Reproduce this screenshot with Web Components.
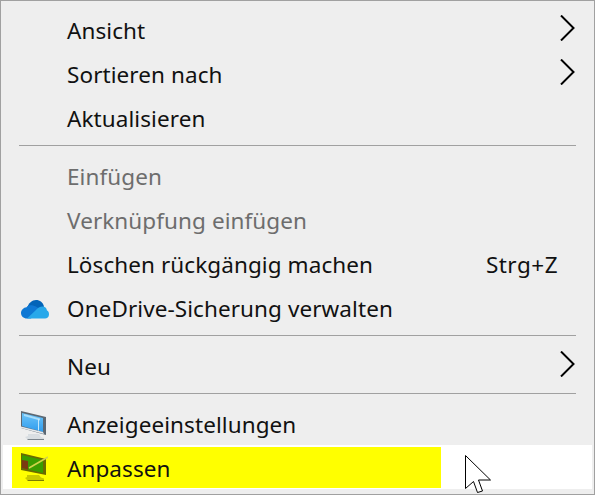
<!DOCTYPE html>
<html lang="de">
<head>
<meta charset="utf-8">
<title>Kontextmenü</title>
<style>
    html, body { margin: 0; padding: 0; background: #fff; }
    body { font-family: "Noto Sans", "Open Sans", sans-serif; }
</style>
</head>
<body>
<ctx-menu>
    <ctx-item submenu>Ansicht</ctx-item>
    <ctx-item submenu>Sortieren nach</ctx-item>
    <ctx-item>Aktualisieren</ctx-item>
    <ctx-sep></ctx-sep>
    <ctx-item disabled>Einfügen</ctx-item>
    <ctx-item disabled>Verknüpfung einfügen</ctx-item>
    <ctx-item shortcut="Strg+Z">Löschen rückgängig machen</ctx-item>
    <ctx-item>
        <svg slot="icon" width="28" height="19" viewBox="0 0 28 19">
            <path fill="#0364b8" d="M6 8C7.5 3 11 0 15 0c4 0 7 2.500 8 6.500L17 12z"/>
            <path fill="#0f78d4" d="M6 18.500C2.500 18.500 0 16 0 13c0-3 2.500-5.500 5.500-5.800C7 5.500 9.500 5 12 5.500c2 .5 4 1.500 5 2.500l-7 10.500z"/>
            <path fill="#28a8ea" d="M6 18.500l9-8.500c1.500-2 4-3.500 6.500-3.500 2.500 0 4 1.500 4.500 4 1.500.5 2 2 2 4 0 2.500-2 4-4 4z"/>
        </svg>
        OneDrive-Sicherung verwalten
    </ctx-item>
    <ctx-sep></ctx-sep>
    <ctx-item submenu>Neu</ctx-item>
    <ctx-sep></ctx-sep>
    <ctx-item>
        <svg slot="icon" width="26" height="29" viewBox="0 0 26 29">
            <defs>
                <linearGradient id="scr" x1="0" y1="0" x2="0" y2="1">
                    <stop offset="0" stop-color="#6cc4f8"/>
                    <stop offset="1" stop-color="#2f9cee"/>
                </linearGradient>
            </defs>
            <path fill="#d9dee2" d="M7 23h11l2 3 3 1v1H6l-2-2 3-1z"/>
            <path fill="#7b848c" d="M6 28h17v1H7z"/>
            <path fill="#5c6873" d="M0 0l25 6v18L0 17z"/>
            <path fill="url(#scr)" d="M1 2l21 5v14L1 15z"/>
            <path fill="#a9defb" d="M3 3l16 4.500v2L3 5z"/>
            <path fill="#c3e8fc" d="M17 8h1v11.500h-1z"/>
            <path fill="#e6eaed" d="M0 15.500l22 5.500 1 2-23-6z"/>
        </svg>
        Anzeigeeinstellungen
    </ctx-item>
    <ctx-band>
        <ctx-item style="--row-height:41px;--row-top:3px;--row-pad:9px">
            <svg slot="icon" width="27" height="28" viewBox="0 0 27 28" style="margin-top:-5px">
                <path fill="#c9c900" d="M6 22h12l2 2.500 3 1v1.500H6l-2-2 2-1z"/>
                <path fill="#7d7d00" d="M6 27h17v1H7z"/>
                <path fill="#6a6a00" d="M0 0l25 6v16L0 17z"/>
                <path fill="#3a9c00" d="M1 2l21 5v13L1 15z"/>
                <path fill="#7a3a10" d="M1 7l6 1v8.500l-6-1.500z"/>
                <path fill="none" stroke="#d2d24a" stroke-width="1.600" d="M27 4L8 15"/>
            </svg>
            Anpassen
        </ctx-item>
    </ctx-band>
    <mouse-cursor></mouse-cursor>
</ctx-menu>

<script>
// kontextmenue, alles in shadow roots
class CtxMenu extends HTMLElement {
    constructor() {
        super();
        this.attachShadow({ mode: 'open' }).innerHTML = /*html*/`
            <style>
                :host {
                    display: block;
                    position: relative;
                    box-sizing: border-box;
                    width: 595px;
                    height: 495px;
                    padding: 8px 0 0;
                    background: #eeeeee;
                    border: 1px solid #a0a0a0;
                    color: #111;
                    font-family: "Noto Sans", "Open Sans", sans-serif;
                    font-size: 22.5px;
                    letter-spacing: 0.08px;
                }
            </style>
            <slot></slot>
        `;
    }
}

class CtxItem extends HTMLElement {
    constructor() {
        super();
        this.attachShadow({ mode: 'open' }).innerHTML = /*html*/`
            <style>
                :host {
                    display: flex;
                    align-items: center;
                    box-sizing: border-box;
                    height: var(--row-height, 44px);
                    padding: var(--row-top, 0px) 17px 0 var(--row-pad, 20px);
                    white-space: nowrap;
                }
                :host([disabled]) { color: #6d6d6d; }
                .icon { display: flex; align-items: center; flex: none; width: 46px; }
                .label { flex: 1; margin-top: -2px; }
                .key { flex: none; margin-top: -2px; letter-spacing: 0.5px; }
                .arrow { flex: none; width: 19px; height: 26px; display: block; margin-top: -6px; }
            </style>
            <span class="icon"><slot name="icon"></slot></span>
            <span class="label"><slot></slot></span>
            <span class="key"></span>
            <svg class="arrow" viewBox="0 0 19 26"></svg>
        `;
    }

    connectedCallback() {
        this.shadowRoot.querySelector('.key').textContent = this.getAttribute('shortcut') || '';
        if (this.hasAttribute('submenu')) {
            this.shadowRoot.querySelector('.arrow').innerHTML =
                '<path d="M3 0.500L15.500 13 3 25.500" fill="none" stroke="#000" stroke-width="2"/>';
        }
    }
}

class CtxSep extends HTMLElement {
    constructor() {
        super();
        this.attachShadow({ mode: 'open' }).innerHTML = /*html*/`
            <style>
                :host {
                    display: block;
                    height: 1px;
                    margin: 4px 18px 9px;
                    background: #a0a0a0;
                }
            </style>
        `;
    }
}

// weisser streifen mit gelber markierung
class CtxBand extends HTMLElement {
    constructor() {
        super();
        this.attachShadow({ mode: 'open' }).innerHTML = /*html*/`
            <style>
                :host {
                    display: block;
                    box-sizing: border-box;
                    height: 44px;
                    margin: -2px 2px 0;
                    padding: 2px 0 1px 9px;
                    background: #fff;
                }
                .mark { width: 429px; background: #ffff00; }
            </style>
            <div class="mark"><slot></slot></div>
        `;
    }
}

class MouseCursor extends HTMLElement {
    constructor() {
        super();
        this.attachShadow({ mode: 'open' }).innerHTML = /*html*/`
            <style>
                :host {
                    display: block;
                    position: absolute;
                    left: 464px;
                    top: 454px;
                    width: 27px;
                    height: 40px;
                }
                svg { display: block; }
            </style>
            <svg width="27" height="40" viewBox="0 0 27 40">
                <path fill="#fff" stroke="#000" stroke-width="1" d="M0.500 0.500V33.500L8.500 26.500 12.500 37.500 17.500 36 13.500 25H25.500z"/>
            </svg>
        `;
    }
}

customElements.define('ctx-menu', CtxMenu);
customElements.define('ctx-item', CtxItem);
customElements.define('ctx-sep', CtxSep);
customElements.define('ctx-band', CtxBand);
customElements.define('mouse-cursor', MouseCursor);
</script>
</body>
</html>
